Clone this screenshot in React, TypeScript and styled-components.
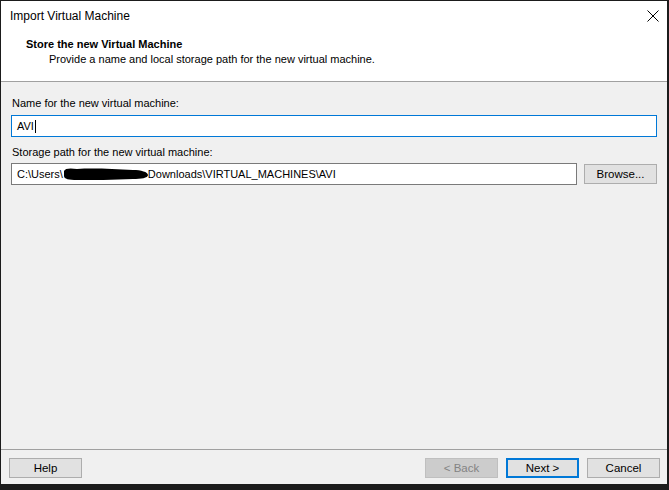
import React from "react";
import styled, { createGlobalStyle } from "styled-components";

const Global = createGlobalStyle`
  html, body { margin: 0; padding: 0; background: #1b1b1b; }
  body { font-family: "Liberation Sans", Arial, sans-serif; }
  #root { width: 669px; height: 490px; }
`;

const Frame = styled.div`
  width: 669px;
  height: 490px;
  box-sizing: border-box;
  background: #1b1b1b;
  padding: 1px 2px 6px 1px;
  display: flex;
`;

const Window = styled.div`
  flex: 1;
  display: flex;
  flex-direction: column;
  background: #f0f0f0;
  font-size: 11px;
  color: #000;
`;

const Top = styled.div`
  height: 80px;
  background: #fff;
  border-bottom: 1px solid #a0a0a0;
  display: flex;
  flex-direction: column;
`;

const TitleBar = styled.div`
  height: 30px;
  display: flex;
  align-items: center;
  justify-content: space-between;
  padding: 0 7px 0 9px;
`;

const Title = styled.span`
  font-size: 12px;
  line-height: 16px;
`;

const Close = styled.div`
  width: 14px;
  height: 14px;
  display: flex;
  align-items: center;
  justify-content: center;
`;

const Header = styled.div`
  padding: 6px 0 0 25px;
  display: flex;
  flex-direction: column;
`;

const HeadTitle = styled.div`
  font-weight: bold;
  line-height: 15px;
`;

const HeadSub = styled.div`
  line-height: 15px;
  padding-left: 23px;
`;

const Body = styled.div`
  flex: 1;
  border-bottom: 1px solid #a0a0a0;
  padding: 0 10px;
  display: flex;
  flex-direction: column;
`;

const Label = styled.div<{ $top: number; $gap: number }>`
  margin-top: ${(p) => p.$top}px;
  margin-bottom: ${(p) => p.$gap}px;
  line-height: 16px;
  padding-left: 1px;
`;

const Row = styled.div`
  display: flex;
  align-items: center;
  gap: 7px;
`;

const Field = styled.div<{ $focused?: boolean }>`
  flex: 1;
  height: 22px;
  box-sizing: border-box;
  background: #fff;
  border: 1px solid ${(p) => (p.$focused ? "#0078d7" : "#7a7a7a")};
  display: flex;
  align-items: center;
  padding-left: 5px;
  white-space: pre;
  line-height: 16px;
`;

const Caret = styled.span`
  display: inline-block;
  width: 1px;
  height: 13px;
  background: #000;
  margin-left: 1px;
`;

const Redact = styled.svg`
  display: inline-block;
  margin: 0 -1px 0 0;
  vertical-align: middle;
`;

const Footer = styled.div`
  height: 34px;
  box-sizing: border-box;
  padding: 8px 7px 0 8px;
  display: flex;
  align-items: flex-start;
  gap: 8px;
`;

const Button = styled.button<{ $variant?: "default" | "primary" | "disabled" }>`
  width: 73px;
  height: 20px;
  box-sizing: border-box;
  margin: 0;
  padding: 0;
  font-family: inherit;
  font-size: 11.5px;
  line-height: 16px;
  background: ${(p) => (p.$variant === "disabled" ? "#cccccc" : "#e1e1e1")};
  color: ${(p) => (p.$variant === "disabled" ? "#838383" : "#000")};
  border: ${(p) =>
    p.$variant === "primary"
      ? "2px solid #0078d7"
      : p.$variant === "disabled"
      ? "1px solid #bfbfbf"
      : "1px solid #adadad"};
`;

const Spacer = styled.div`
  flex: 1;
`;

export default function App() {
  return (
    <>
      <Global />
      <Frame>
        <Window>
          <Top>
            <TitleBar>
              <Title>Import Virtual Machine</Title>
              <Close>
                <svg width="12" height="12" viewBox="0 0 12 12">
                  <path d="M0.5 0.5 L11.5 11.5 M11.5 0.5 L0.5 11.5" stroke="#000" strokeWidth="1" fill="none" />
                </svg>
              </Close>
            </TitleBar>
            <Header>
              <HeadTitle>Store the new Virtual Machine</HeadTitle>
              <HeadSub>Provide a name and local storage path for the new virtual machine.</HeadSub>
            </Header>
          </Top>
          <Body>
            <Label $top={13} $gap={4}>Name for the new virtual machine:</Label>
            <Row>
              <Field $focused>
                AVI
                <Caret />
              </Field>
            </Row>
            <Label $top={7} $gap={3}>Storage path for the new virtual machine:</Label>
            <Row>
              <Field>
                {"C:\\Users\\"}
                <Redact width="86" height="14" viewBox="0 0 86 14">
                  <path
                    d="M1 4 C2 1 8 1 14 2 C30 1 50 2 70 3 C78 3 85 5 85 8 C85 11 78 12 70 12 C50 13 30 13 14 13 C6 13 1 12 1 9 Z"
                    fill="#000"
                  />
                </Redact>
                {"Downloads\\VIRTUAL_MACHINES\\AVI"}
              </Field>
              <Button>Browse...</Button>
            </Row>
          </Body>
          <Footer>
            <Button>Help</Button>
            <Spacer />
            <Button $variant="disabled">&lt; Back</Button>
            <Button $variant="primary">Next &gt;</Button>
            <Button>Cancel</Button>
          </Footer>
        </Window>
      </Frame>
    </>
  );
}
